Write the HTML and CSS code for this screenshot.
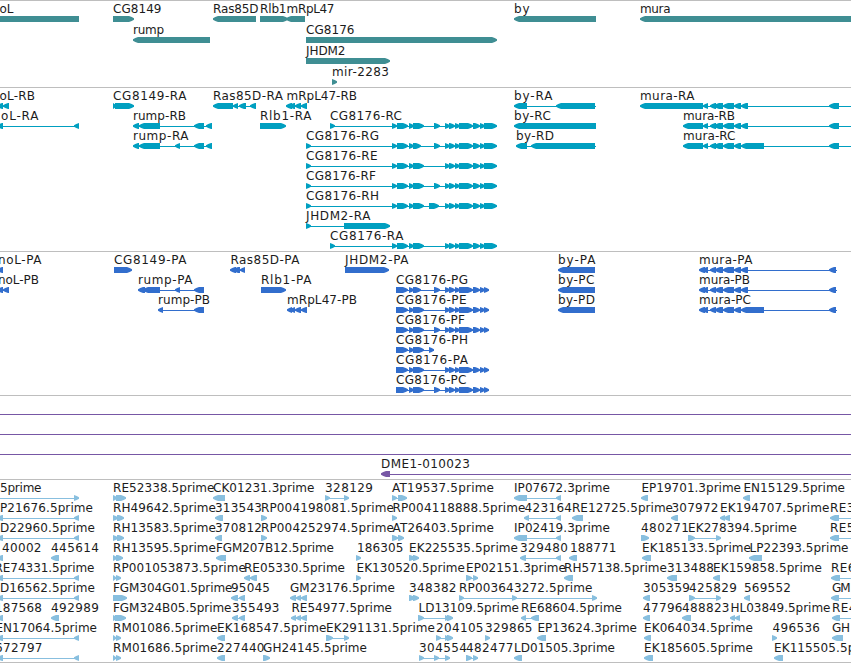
FILE: index.html
```html
<!DOCTYPE html>
<html lang="en">
<head>
  <meta charset="UTF-8">
  <meta name="viewport" content="width=device-width, initial-scale=1.0">
  <title>Genome Browser</title>
  <link rel="stylesheet" href="styles.css">
</head>
<body>

<div class="browser">
  <div class="track genes" id="genes"></div>
  <div class="track transcripts" id="transcripts"></div>
  <div class="track proteins" id="proteins"></div>
  <div class="track bacs" id="bacs"></div>
  <div class="track ests" id="ests"></div>
  <div class="track end"></div>
</div>

<script src="script.js"></script>
</body>
</html>
```

FILE: styles.css
```css
* {
  margin: 0;
  padding: 0;
  box-sizing: border-box;
}

body {
  background-color: #fff;
  overflow: hidden;
}

.browser {
  display: flex;
  flex-direction: column;
  width: 851px;
  height: 663px;
  overflow: hidden;
}

.track {
  flex: none;
  border-top: 1px solid #bebebe;
  overflow: hidden;
}

.track svg {
  display: block;
  width: 851px;
  height: 100%;
}

.track text {
  font-family: "DejaVu Sans", sans-serif;
  font-size: 12px;
  fill: #1c1c1c;
}

.genes {
  height: 87px;
  color: #3f8e93;
}

.transcripts {
  height: 164px;
  color: #009fc0;
}

.proteins {
  height: 144px;
  color: #326ecd;
}

.bacs {
  height: 84px;
  color: #7757a5;
}

.ests {
  height: 183px;
  color: #88bfdf;
}

.end {
  height: 1px;
}
```

FILE: script.js
```javascript
// feature: [label, label start, label end, strand, exons, line end]
const L = '<';
const R = '>';

const cgMid = '392-397 397-408 409-414 413-424';
const cgEnd = '445-450 449-455 455-460 459-473 473-480 480-485 484-497';
const cgPep = '445-450 449-455 455-460 459-473 473-480 480-485 484-489';
const muraMid = '703-708 710-716 714-723 723-734 734-741';
const muraPep = '699-705 702-708 710-716 715-723 723-734 734-741';

const genes = [
  [
    ['oL', 0, 13, R, '-20-79 '],
    ['CG8149', 113.5, 161, R, '113-134'],
    ['Ras85D', 213.5, 258, L, '213-256'],
    ['Rlb1', 260.5, 286, R, '260-288'],
    ['mRpL47', 287, 334, L, '286-305'],
    ['by', 514.5, 529, L, '514-596'],
    ['mura', 640.5, 670, L, '640-900']
  ],
  [
    ['rump', 133.5, 163.5, L, '133-210'],
    ['CG8176', 306.5, 354, R, '306-497']
  ],
  [['JHDM2', 306.5, 345, R, '306-390']],
  [['mir-2283', 332.5, 388.5, R, '332-337']]
];

const transcripts = [
  [
    ['oL-RB', 0, 34.5, L, '-3-3 3-9'],
    ['CG8149-RA', 113.5, 186, R, '113-116 115-134'],
    ['Ras85D-RA', 213.5, 282.5, L, '213-233 233-238 239-246 250-256'],
    ['mRpL47-RB', 287, 356.5, L, '286-292 289-295 295-301 301-307'],
    ['by-RA', 514.5, 552, L, '514-527 556-595', 596],
    ['mura-RA', 640.5, 694, L, `640-703 ${muraMid} 741-748 829-839`, 900]
  ],
  [
    ['oL-RA', 1.5, 38, L, '-3-3 74-79'],
    ['rump-RB', 133.5, 185.5, L, '133-139 139-160 194-204 206-212'],
    ['Rlb1-RA', 260.5, 311, R, '260-286'],
    ['CG8176-RC', 330.5, 401.5, R, `330-335 ${cgMid} 434-440 ${cgEnd}`],
    ['by-RC', 514.5, 550.5, L, '514-596'],
    ['mura-RB', 683.5, 734.5, L, `683-703 ${muraMid} 741-748 829-839`, 900]
  ],
  [
    ['rump-RA', 133.5, 188, L, '133-139 139-160 175-180 194-204 206-212'],
    ['CG8176-RG', 306.5, 378.5, R, `306-311 392-397 397-408 409-414 413-421 434-440 ${cgEnd}`],
    ['by-RD', 516.5, 553.5, L, '516-527 531-595', 596],
    ['mura-RC', 683.5, 735, L, `683-703 ${muraMid} 741-764 829-839`, 900]
  ],
  [['CG8176-RE', 306.5, 377, R, `306-311 ${cgMid} ${cgEnd}`]],
  [['CG8176-RF', 306.5, 375.5, R, `306-311 ${cgMid} 434-440 ${cgEnd}`]],
  [['CG8176-RH', 306.5, 378.5, R, `306-311 ${cgMid} 429-439 ${cgEnd}`]],
  [['JHDM2-RA', 306.5, 370, R, '306-311 344-390']],
  [['CG8176-RA', 330.5, 403, R, `330-335 ${cgMid} ${cgEnd}`]]
];

const proteins = [
  [
    ['noL-PA', -1.5, 41, L, '-3-3'],
    ['CG8149-PA', 114.5, 186, R, '114-132'],
    ['Ras85D-PA', 231, 299, L, '230-236 233-240 240-245'],
    ['JHDM2-PA', 345.5, 408, R, '345-389'],
    ['by-PA', 558.5, 595, L, '558-595'],
    ['mura-PA', 699.5, 752, L, `${muraPep} 741-748 829-836`, 837]
  ],
  [
    ['noL-PB', -1.5, 38.5, L, '-3-3 3-9'],
    ['rump-PA', 138.5, 192, L, '138-145 143-160 175-180 194-204'],
    ['Rlb1-PA', 261.5, 311, R, '261-286'],
    ['CG8176-PG', 396.5, 467.5, R, `396-408 409-414 413-421 434-440 ${cgPep}`],
    ['by-PC', 558.5, 594, L, '558-595'],
    ['mura-PB', 699.5, 749.5, L, `${muraPep} 741-748 829-836`, 837]
  ],
  [
    ['rump-PB', 158.5, 209.5, L, '158-163 194-204'],
    ['mRpL47-PB', 287.5, 356.5, L, '287-292 290-295 295-301 301-307'],
    ['CG8176-PE', 396.5, 466, R, `396-408 409-414 413-424 ${cgPep}`],
    ['by-PD', 558.5, 594.5, L, '558-595'],
    ['mura-PC', 699.5, 750.5, L, `${muraPep} 741-764 829-836`, 837]
  ],
  [['CG8176-PF', 396.5, 464.5, R, `396-408 409-414 413-424 434-440 ${cgPep}`]],
  [['CG8176-PH', 396.5, 467.5, R, '396-408 409-414 413-424 429-434']],
  [['CG8176-PA', 396.5, 467.5, R, `396-408 409-414 413-424 ${cgPep}`]],
  [['CG8176-PC', 396.5, 466, R, `396-408 409-414 413-424 434-440 ${cgPep}`]]
];

const bacs = [
  [['', 0, 0, R, '-20--10', 900]],
  [['', 0, 0, R, '-20--10', 900]],
  [['', 0, 0, R, '-20--10', 900]],
  [['DME1-010023', 381.5, 469.5, L, '381-390', 900]]
];

const ests = [
  [
    ['5prime', 0.5, 41, R, '-9--4 74-79'],
    ['RE52338.5prime', 113.5, 214, R, '113-117 116-126'],
    ['CK01231.3prime', 213.5, 314, L, '213-225'],
    ['328129', 325.5, 372.5, R, '325-330 344-349'],
    ['AT19537.5prime', 392.5, 493.5, R, '392-397 398-407'],
    ['IP07672.3prime', 514.5, 609.5, L, '514-527 556-561'],
    ['EP19701.3prime', 642, 740.5, L, '641-648'],
    ['EN15129.5prime', 744, 844.5, L, '743-750']
  ],
  [
    ['P21676.5prime', 0.5, 92.5, L, '-3-3 74-79'],
    ['RH49642.5prime', 113.5, 215.5, R, '113-118 117-124'],
    ['313543', 215.5, 261.5, L, '215-223'],
    ['RP004198081.5prime', 261.5, 393.5, R, '261-267'],
    ['RP004118888.5prime', 393, 525, R, '392-397'],
    ['423164', 525, 571.5, L, '524-529 556-561'],
    ['RE12725.5prime', 572.5, 672.5, L, '572-583'],
    ['307972', 672, 718, L, '671-678'],
    ['EK194707.5prime', 720.5, 829, L, '720-725 724-730'],
    ['RE3', 830.5, 854, L, '830-839', 900]
  ],
  [
    ['D22960.5prime', 0.5, 94.5, L, '-3-3 74-79'],
    ['RH13583.5prime', 113.5, 215.5, R, '113-118 117-124'],
    ['370812', 215.5, 261.5, L, '215-222'],
    ['RP004252974.5prime', 261.5, 393.5, R, '261-267'],
    ['AT26403.5prime', 393, 493.5, R, '392-398 398-404'],
    ['IP02419.3prime', 514.5, 609.5, L, '514-527 556-561'],
    ['480271', 641.5, 688.5, R, '641-649'],
    ['EK278394.5prime', 688.5, 796.5, R, '688-695 716-721'],
    ['RE5', 830.5, 854, L, '830-839', 900]
  ],
  [
    ['40002', 2.5, 41, L, '-3-3'],
    ['445614', 51.5, 98.5, L, '51-59'],
    ['RH13595.5prime', 113.5, 215.5, R, '113-117 116-123'],
    ['FGM207B12.5prime', 216.5, 333.5, L, '216-226'],
    ['186305', 357.5, 403, R, '356-361'],
    ['EK225535.5prime', 409.5, 517.5, R, '409-415 413-419'],
    ['329480', 520.5, 567.5, L, '520-526 556-561'],
    ['188771', 570.5, 616, L, '569-577'],
    ['EK185133.5prime', 642.5, 750.5, L, '642-651'],
    ['LP22393.5prime', 750, 848, L, '749-762']
  ],
  [
    ['RE74331.5prime', -5, 94, L, '-3-3 74-79'],
    ['RP001053873.5prime', 113.5, 245.5, R, '113-116 116-121'],
    ['RE05330.5prime', 244.5, 344.5, L, '244-250 250-257'],
    ['EK130520.5prime', 357, 464.5, R, '356-361'],
    ['EP02151.3prime', 466.5, 565.5, R, '466-472 473-478'],
    ['RH57138.5prime', 564.5, 666.5, L, '564-573'],
    ['313488', 667.5, 713.5, L, '667-677'],
    ['EK159858.5prime', 713.5, 821.5, L, '713-720'],
    ['RE6', 831.5, 855, L, '831-840', 900]
  ],
  [
    ['D16562.5prime', 0.5, 94.5, L, '-3-3 74-79'],
    ['FGM304G01.5prime', 113.5, 232, R, '113-127'],
    ['95045', 231.5, 269.5, L, '231-238 239-245'],
    ['GM23176.5prime', 290.5, 394.5, L, '290-296 296-301 301-307'],
    ['348382', 409.5, 456, R, '409-415 413-419'],
    ['RP003643272.5prime', 459.5, 592, R, '459-464 512-517 592-597'],
    ['305359', 643.5, 689.5, L, '643-650'],
    ['425829', 689.5, 736.5, R, '689-695 716-721'],
    ['569552', 744.5, 790.5, L, '744-750'],
    ['GM', 832.5, 850, L, '831-839', 900]
  ],
  [
    ['187568', -4.5, 41.5, L, '-3-3'],
    ['492989', 51.5, 98.5, L, '51-59'],
    ['FGM324B05.5prime', 113.5, 231, R, '113-117 115-126'],
    ['355493', 232.5, 279, L, '232-238 239-245'],
    ['RE54977.5prime', 292, 391.5, L, '291-296 296-301 301-307'],
    ['LD13109.5prime', 419, 518.5, R, '418-424 445-449 447-453'],
    ['RE68604.5prime', 521.5, 621.5, L, '521-526 531-539'],
    ['47796', 643.5, 682, L, '643-650'],
    ['488823', 682.5, 729, L, '682-691'],
    ['HL03849.5prime', 731, 830, L, '730-735 735-740'],
    ['RE4', 832.5, 856, L, '832-840', 900]
  ],
  [
    ['EN17064.5prime', -4, 96.5, L, '-3-3 74-79'],
    ['RM01086.5prime', 113.5, 217, R, '113-116 116-121'],
    ['EK168547.5prime', 217.5, 326, L, '217-225'],
    ['EK291131.5prime', 326.5, 434.5, R, '326-333 344-349'],
    ['204105', 436.5, 483, R, '436-441 445-449 447-453'],
    ['329865', 485.5, 532, R, '485-490'],
    ['EP13624.3prime', 538, 636.5, L, '537-546'],
    ['EK064034.5prime', 644.5, 752.5, L, '644-651'],
    ['496536', 773, 819.5, R, '772-777'],
    ['GH', 832.5, 849.5, L, '832-843']
  ],
  [
    ['672797', -4.5, 42, L, '-3-3 74-79'],
    ['RM01686.5prime', 113.5, 217, R, '113-116 116-121'],
    ['227440', 217.5, 264, L, '217-225'],
    ['GH24145.5prime', 263.5, 366.5, R, '263-270'],
    ['304554', 419.5, 466.5, R, '419-424 434-439 445-450'],
    ['482477', 466.5, 513, R, '466-472 473-478'],
    ['LD01505.3prime', 514.5, 614.5, L, '514-522'],
    ['EK185605.5prime', 644.5, 752.5, L, '644-653'],
    ['EK115505.5prime', 774.5, 882.5, L, '774-783']
  ]
];

// block with a blunt, slightly rounded tip on the strand side
function exonShape(start, end, strand, top) {
  const tip = Math.min(5, end - start);
  const bottom = top + 6;
  const tail = strand === L ? end : start;
  const point = strand === L ? start : end;
  const dir = strand === L ? 1 : -1;
  const neck = point + dir * tip;
  const mid = point + dir * tip * 0.45;
  return `<path d="M${tail} ${top}H${neck}L${mid} ${top + 1}L${point} ${top + 2.3}V${top + 3.7}` +
    `L${mid} ${bottom - 1}L${neck} ${bottom}H${tail}Z"/>`;
}

function drawFeature(feature, y) {
  const [label, from, to, strand, exonList, lineEnd] = feature;
  const exons = exonList.trim().split(' ').map(e => e.match(/^(-?\d+)-(-?\d+)$/).slice(1).map(Number));
  const first = exons[0][0];
  const last = lineEnd || exons[exons.length - 1][1];
  let out = '';
  if (exons.length > 1 || lineEnd) {
    out += `<rect x="${first + 1}" y="${y + 18}" width="${last - first - 1}" height="1"/>`;
  }
  exons.forEach(([start, end]) => {
    // the left-most gene has a square end
    if (start === -20 && end === 79) {
      out += `<rect x="0" y="${y + 15}" width="79" height="6"/>`;
    } else {
      out += exonShape(start, end, strand, y + 15);
    }
  });
  if (label) {
    out += `<text x="${from - 0.5}" y="${y + 12}" textLength="${to - from + 1}">${label}</text>`;
  }
  return out;
}

function drawTrack(id, rows, pitch) {
  const shapes = rows.map((row, i) => row.map(f => drawFeature(f, i * pitch)).join('')).join('');
  document.getElementById(id).innerHTML = `<svg fill="currentColor">${shapes}</svg>`;
}

drawTrack('genes', genes, 21);
drawTrack('transcripts', transcripts, 20);
drawTrack('proteins', proteins, 20);
drawTrack('bacs', bacs, 20);
drawTrack('ests', ests, 20);
```
